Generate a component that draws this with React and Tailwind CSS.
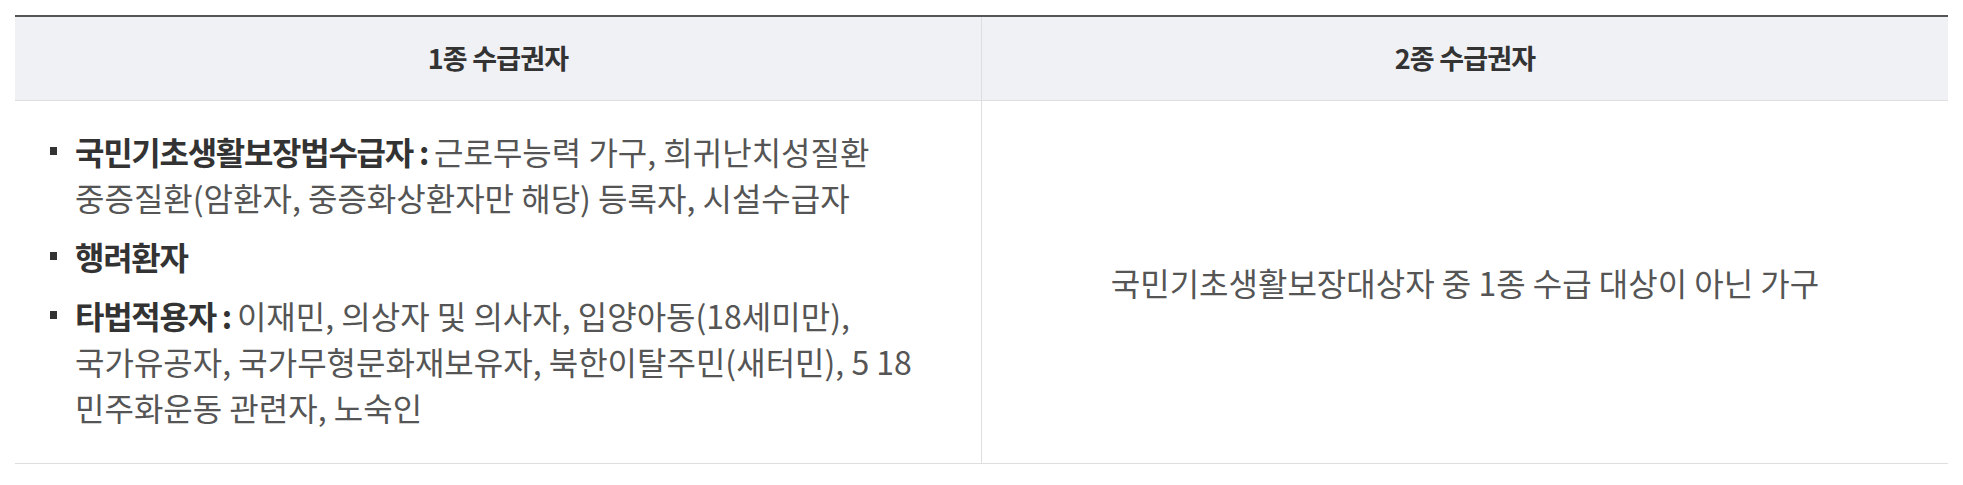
export default function App() {
  const font = { fontFamily: '"Noto Sans CJK KR", "Noto Sans", sans-serif' };
  return (
    <div className="min-h-screen bg-white pt-[15px] px-[15px]" style={font}>
      <table className="w-full table-fixed border-collapse border-t-2 border-t-[#555] border-b border-b-[#dedede]">
        <thead>
          <tr className="bg-[#f0f1f5]">
            <th className="h-[84px] border-b border-[#dedede] border-r text-center text-[27px] font-bold tracking-[-0.03em] text-[#333]">
              1종 수급권자
            </th>
            <th className="h-[84px] border-b border-[#dedede] text-center text-[27px] font-bold tracking-[-0.03em] text-[#333]">
              2종 수급권자
            </th>
          </tr>
        </thead>
        <tbody>
          <tr>
            <td className="border-r border-[#dedede] pt-[27px] pb-[33px] pl-[35px] pr-6 align-top">
              <ul className="space-y-[13px] text-[32px] leading-[46px] text-[#555]">
                <Item label="국민기초생활보장법수급자">
                  근로무능력 가구, 희귀난치성질환
                  <br />
                  중증질환(암환자, 중증화상환자만 해당) 등록자, 시설수급자
                </Item>
                <Item label="행려환자" />
                <Item label="타법적용자">
                  이재민, 의상자 및 의사자, 입양아동(18세미만),
                  <br />
                  국가유공자, 국가무형문화재보유자, 북한이탈주민(새터민), 5 18
                  <br />
                  민주화운동 관련자, 노숙인
                </Item>
              </ul>
            </td>
            <td className="text-center align-middle text-[32px] text-[#555]">
              국민기초생활보장대상자 중 1종 수급 대상이 아닌 가구
            </td>
          </tr>
        </tbody>
      </table>
    </div>
  );
}

function Item({ label, children }) {
  return (
    <li className="relative pl-[25px]">
      <span className="absolute left-0 top-[19px] h-[8px] w-[7px] bg-[#333]" />
      <span className="font-bold tracking-[-0.04em] text-[#333]">
        {label}
        {children ? " : " : ""}
      </span>
      {children}
    </li>
  );
}
